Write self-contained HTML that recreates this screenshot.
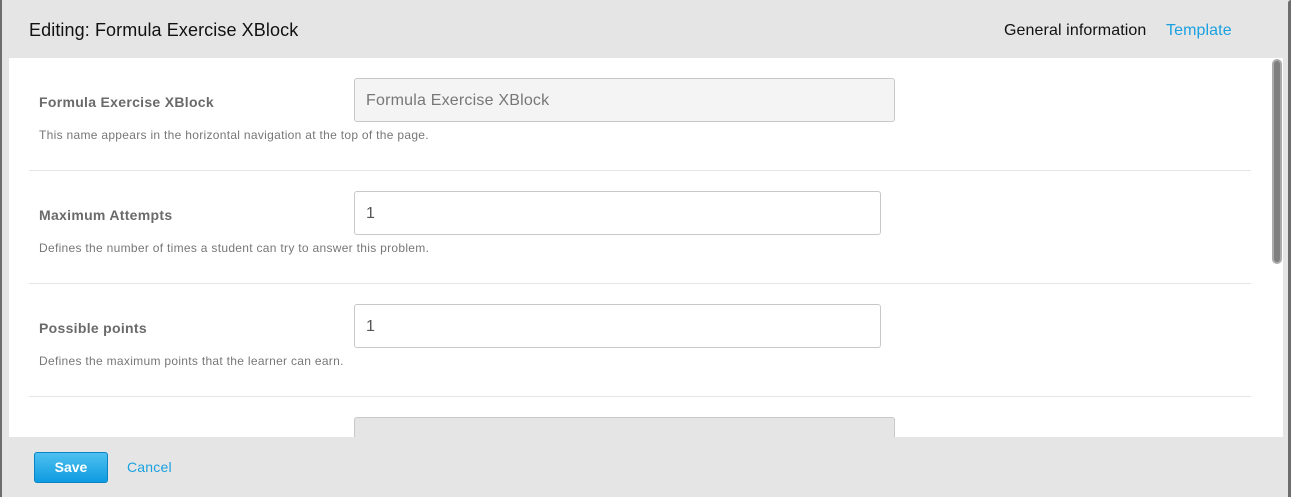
<!DOCTYPE html>
<html><head><style>
*{margin:0;padding:0;box-sizing:border-box}
body{width:1291px;height:497px;background:#e5e5e5;font-family:"Liberation Sans",sans-serif;position:relative;overflow:hidden}
.lb{position:absolute;left:0;top:0;width:2px;height:497px;background:#6d6d6d}
.rb{position:absolute;right:0;top:0;width:3px;height:497px;background:#6d6d6d;border-top-left-radius:6px}
.title{position:absolute;left:29px;top:20px;font-size:18px;color:#111;letter-spacing:0.1px}
.nav{position:absolute;top:22px;font-size:16px;letter-spacing:0.1px}
.main{position:absolute;left:9px;top:58px;width:1262px;height:379px;background:#fff;overflow:hidden}
.sb{position:absolute;left:1271px;top:58px;width:12px;height:379px;background:#fff}
.thumb{position:absolute;left:1272px;top:59px;width:10px;height:205px;background:#7f7f7f;border:2px solid #aaa;border-radius:5px}
.row{position:absolute;left:20px;width:1222px;border-bottom:1px solid #e5e5e5;height:113px}
.lbl{position:absolute;left:10px;font-size:14px;font-weight:bold;color:#6a6a6a;letter-spacing:0.3px}
.help{position:absolute;left:10px;font-size:12px;color:#777;letter-spacing:0.3px}
.inp{position:absolute;left:325px;height:44px;border:1px solid #c8c8c8;border-radius:3px;font-size:16px;color:#555;padding:13px 11px 0;letter-spacing:0.2px}
.save{position:absolute;left:34px;top:452px;width:74px;height:31px;background:linear-gradient(#4fc0f0,#0d9be0);border:1px solid #0b84c4;border-radius:3px;color:#fff;font-weight:bold;font-size:14px;text-align:center;line-height:29px}
.cancel{position:absolute;left:127px;top:459px;font-size:14px;color:#1aa1e0;letter-spacing:0.2px}
</style></head><body>
<div class="lb"></div><div class="rb"></div>
<div class="title">Editing: Formula Exercise XBlock</div>
<div class="nav" style="left:1004px;color:#111">General information</div>
<div class="nav" style="left:1166px;color:#1aa1e0">Template</div>
<div class="main">
 <div class="row" style="top:0">
  <div class="lbl" style="top:36px">Formula Exercise XBlock</div>
  <div class="inp" style="top:20px;width:541px;background:#f4f4f4;color:#777">Formula Exercise XBlock</div>
  <div class="help" style="top:70px">This name appears in the horizontal navigation at the top of the page.</div>
 </div>
 <div class="row" style="top:113px">
  <div class="lbl" style="top:36px">Maximum Attempts</div>
  <div class="inp" style="top:20px;width:527px">1</div>
  <div class="help" style="top:70px">Defines the number of times a student can try to answer this problem.</div>
 </div>
 <div class="row" style="top:226px">
  <div class="lbl" style="top:36px">Possible points</div>
  <div class="inp" style="top:20px;width:527px">1</div>
  <div class="help" style="top:70px">Defines the maximum points that the learner can earn.</div>
 </div>
 <div class="inp" style="left:345px;top:359px;width:541px;background:#e5e5e5"></div>
</div>
<div class="sb"></div><div class="thumb"></div>
<div class="save">Save</div>
<div class="cancel">Cancel</div>
</body></html>
